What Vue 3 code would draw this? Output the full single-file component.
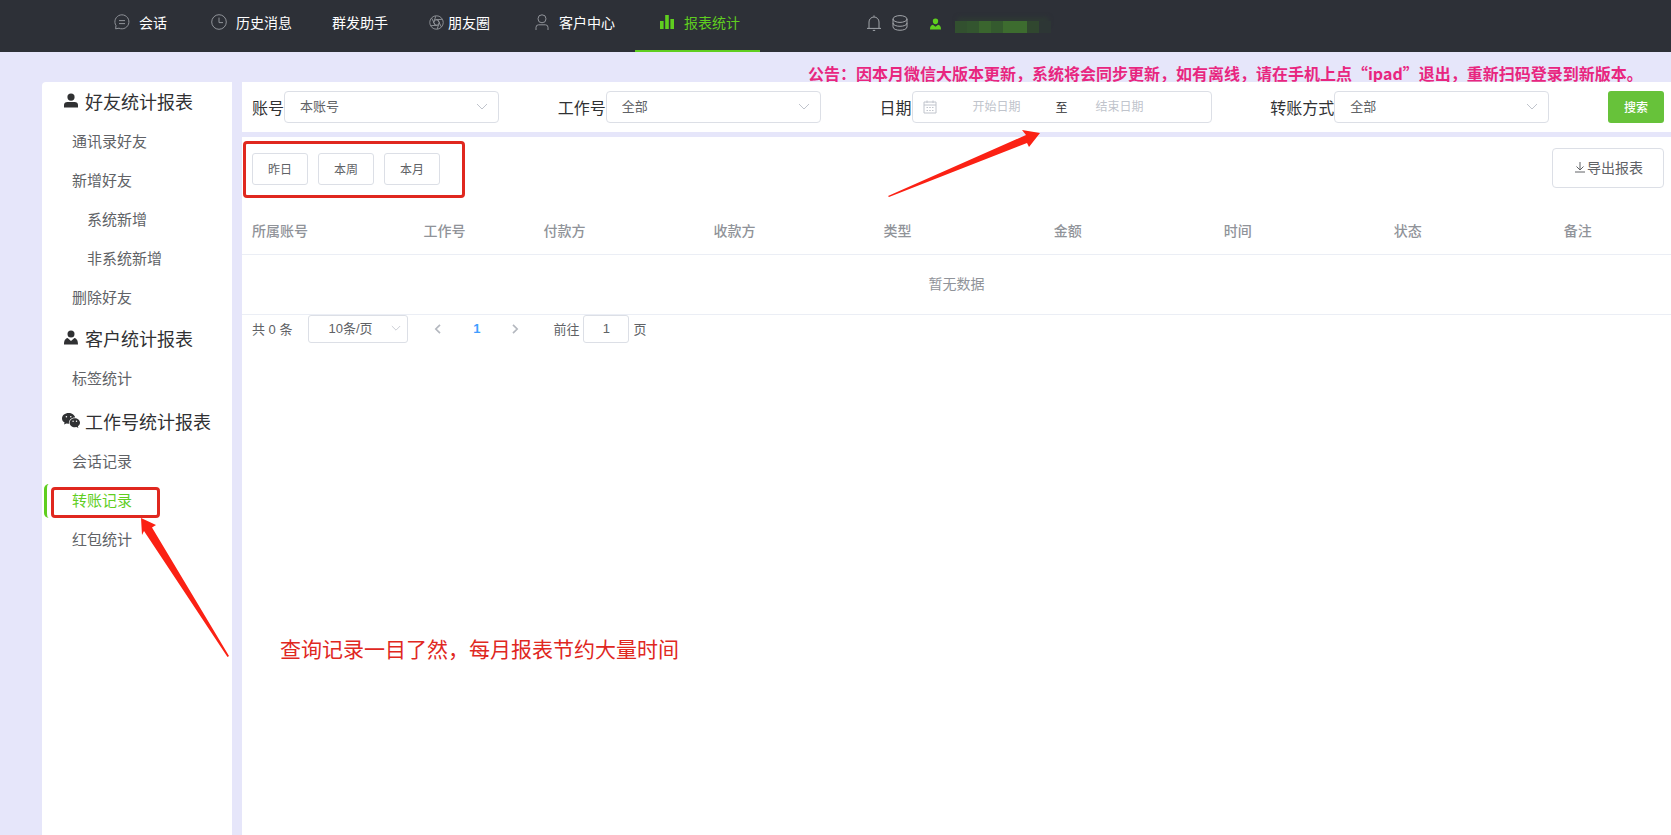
<script setup>
import { ref } from 'vue'

const nav = [
  { label: '会话', icon: 'chat' },
  { label: '历史消息', icon: 'clock' },
  { label: '群发助手', icon: '' },
  { label: '朋友圈', icon: 'aperture' },
  { label: '客户中心', icon: 'person' },
  { label: '报表统计', icon: 'bars', active: true }
]

const groups = [
  {
    title: '好友统计报表',
    icon: 'friend',
    items: [
      { label: '通讯录好友' },
      { label: '新增好友' },
      { label: '系统新增', nested: true },
      { label: '非系统新增', nested: true },
      { label: '删除好友' }
    ]
  },
  { title: '客户统计报表', icon: 'client', items: [{ label: '标签统计' }] },
  {
    title: '工作号统计报表',
    icon: 'wechat',
    items: [{ label: '会话记录' }, { label: '转账记录', active: true }, { label: '红包统计' }]
  }
]

const columns = ['所属账号', '工作号', '付款方', '收款方', '类型', '金额', '时间', '状态', '备注']
const ranges = ['昨日', '本周', '本月']

const start = ref('')
const end = ref('')
const page = ref('1')
</script>

<template>
  <div class="page">
    <header class="topbar">
      <nav class="nav">
        <a v-for="n in nav" :key="n.label" href="#" class="nav-item" :class="[n.icon, { active: n.active }]">
          <svg v-if="n.icon === 'chat'" viewBox="0 0 16 16" width="16" height="16">
            <path d="M1.6 14.8 L2 11.6 A7 7 0 1 1 5 14.2 Z M5 6.6h6 M5 9.6h6" />
          </svg>
          <svg v-else-if="n.icon === 'clock'" viewBox="0 0 16 16" width="16" height="16">
            <circle cx="8" cy="8" r="7.3" />
            <path d="M8 3.6V8.6h4" />
          </svg>
          <svg v-else-if="n.icon === 'aperture'" viewBox="0 0 16 16" width="15" height="15">
            <circle cx="8" cy="8" r="7.2" />
            <path d="M6.8 5.1 14 4.6 M9.2 5.1 13.2 12.6 M11.2 8 8.6 15 M9.2 10.9 2 11.4 M6.8 10.9 2.8 3.4 M4.8 8 7.4 1" />
            <path d="M6.8 5.1h2.4L11.2 8 9.2 10.9H6.8L4.8 8z" />
          </svg>
          <svg v-else-if="n.icon === 'person'" viewBox="0 0 14 16" width="14" height="16">
            <circle cx="7" cy="4.8" r="4" />
            <path d="M1 16V13.4a2.6 2.6 0 0 1 2.6-2.6h6.8a2.6 2.6 0 0 1 2.6 2.6V16" />
          </svg>
          <svg v-else-if="n.icon === 'bars'" class="solid" viewBox="0 0 14 14" width="14" height="14">
            <path d="M0 6h3.6v8H0zM5.2 0h3.6v14H5.2zM10.4 4H14v10h-3.6z" />
          </svg>
          <span>{{ n.label }}</span>
        </a>
      </nav>
      <div class="tools">
        <button class="tool" aria-label="通知">
          <svg viewBox="0 0 16 16" width="16" height="16">
            <path d="M8 .4v1.4M1 13.4h14M3 13.4V7a5 5 0 0 1 10 0v6.4M6.8 15.4h2.4" />
          </svg>
        </button>
        <button class="tool" aria-label="数据">
          <svg viewBox="0 0 16 16" width="16" height="16">
            <ellipse cx="8" cy="4" rx="7" ry="3.400" />
            <path d="M1 4v7.800c0 4.600 14 4.600 14 0V4M1 8c0 4.400 14 4.400 14 0" />
          </svg>
        </button>
        <svg class="user" viewBox="0 0 12 12" width="11" height="12">
          <path d="M6 0a2.9 2.9 0 0 1 2.9 3.1C8.900 5 7.600 6.400 6 6.400S3.100 5 3.100 3.100A2.900 2.900 0 0 1 6 0zM3.200 6.800 6 9l2.800-2.200C11 7.400 12 8.800 12 12H0c0-3.200 1-4.600 3.200-5.200z" />
        </svg>
        <span class="mosaic"></span>
      </div>
    </header>

    <p class="notice">公告：因本月微信大版本更新，系统将会同步更新，如有离线，请在手机上点“ipad”退出，重新扫码登录到新版本。</p>

    <div class="body">
      <aside class="sidebar">
        <section v-for="g in groups" :key="g.title" class="group" :class="g.icon">
          <h2>
            <svg v-if="g.icon === 'friend'" viewBox="0 0 14 14" width="14" height="15">
              <circle cx="7" cy="3.600" r="3.600" />
              <path d="M0 14v-2.400C0 9.400 1.400 8.400 3.400 8.400h7.200c2 0 3.400 1 3.400 3.200V14z" />
            </svg>
            <svg v-else-if="g.icon === 'client'" viewBox="0 0 14 14" width="14" height="15">
              <circle cx="7" cy="3.600" r="3.500" />
              <path d="M3.600 7.400 7 10.400l3.400-3C13 8.200 14 10 14 14H0c0-4 1-5.800 3.600-6.600z" />
            </svg>
            <svg v-else viewBox="0 0 18 15" width="18" height="15">
              <path d="M6.600 0C3 0 0 2.400 0 5.400c0 1.800 1 3.200 2.600 4.200L2 11.600l2.400-1.200 2.600.4C6.400 7 9.600 4.400 13.200 4.500 12.600 1.800 9.800 0 6.600 0z" />
              <path d="M18 9.700c0-2.500-2.400-4.500-5.200-4.500S7.600 7.200 7.600 9.700s2.400 4.500 5.200 4.500l1.700-.3 1.900 1-.5-1.700C17.200 12.400 18 11.200 18 9.700z" />
              <g class="eyes">
                <circle cx="4.400" cy="3.800" r=".8" /><circle cx="8.800" cy="3.800" r=".8" />
                <circle cx="11.100" cy="8.300" r=".7" /><circle cx="14.500" cy="8.300" r=".7" />
              </g>
            </svg>
            {{ g.title }}
          </h2>
          <ul>
            <li v-for="i in g.items" :key="i.label">
              <a href="#" :class="{ nested: i.nested, active: i.active }">{{ i.label }}</a>
            </li>
          </ul>
        </section>
      </aside>

      <main class="main">
        <form class="filters" @submit.prevent>
          <div class="field">
            <label for="account">账号</label>
            <span class="pick">
              <select id="account"><option>本账号</option></select>
              <svg viewBox="0 0 12 8" width="12" height="8"><path d="M1 1l5 5 5-5" /></svg>
            </span>
          </div>
          <div class="field">
            <label for="worker">工作号</label>
            <span class="pick">
              <select id="worker"><option>全部</option></select>
              <svg viewBox="0 0 12 8" width="12" height="8"><path d="M1 1l5 5 5-5" /></svg>
            </span>
          </div>
          <div class="field">
            <label for="start">日期</label>
            <span class="dates">
              <svg viewBox="0 0 14 14" width="14" height="14">
                <path d="M1 2h12v11H1zM1 5h12M4 .5V3M10 .5V3M3.500 7.500h1.500M6.200 7.500h1.600M9 7.500h1.500M3.500 10.500h1.500M6.200 10.500h1.600M9 10.500h1.500" />
              </svg>
              <input id="start" v-model="start" type="text" placeholder="开始日期" />
              <span class="to">至</span>
              <input v-model="end" type="text" placeholder="结束日期" aria-label="结束日期" />
            </span>
          </div>
          <div class="field">
            <label for="method">转账方式</label>
            <span class="pick">
              <select id="method"><option>全部</option></select>
              <svg viewBox="0 0 12 8" width="12" height="8"><path d="M1 1l5 5 5-5" /></svg>
            </span>
          </div>
          <button class="search" type="submit">搜索</button>
        </form>

        <section class="content">
          <div class="actions">
            <div class="ranges">
              <button v-for="r in ranges" :key="r">{{ r }}</button>
            </div>
            <button class="export">
              <svg viewBox="0 0 12 12" width="12" height="12"><path d="M6 1v8M2.500 5.500 6 9l3.500-3.500M1 11h10" /></svg>
              <span>导出报表</span>
            </button>
          </div>

          <table>
            <thead>
              <tr><th v-for="c in columns" :key="c" scope="col">{{ c }}</th></tr>
            </thead>
            <tbody>
              <tr><td :colspan="columns.length">暂无数据</td></tr>
            </tbody>
          </table>

          <div class="pager">
            <span class="total">共 0 条</span>
            <span class="pick size">
              <select aria-label="每页条数"><option>10条/页</option></select>
              <svg viewBox="0 0 12 8" width="10" height="7"><path d="M1 1l5 5 5-5" /></svg>
            </span>
            <button class="step" aria-label="上一页">
              <svg viewBox="0 0 8 12" width="7" height="10"><path d="M7 1L2 6l5 5" /></svg>
            </button>
            <button class="current">1</button>
            <button class="step" aria-label="下一页">
              <svg viewBox="0 0 8 12" width="7" height="10"><path d="M1 1l5 5-5 5" /></svg>
            </button>
            <label class="jump">前往<input v-model="page" type="text" />页</label>
          </div>
        </section>
      </main>
    </div>

    <div class="mark mark-menu"></div>
    <div class="mark mark-ranges"></div>
    <svg class="arrow arrow-menu" viewBox="0 0 88 140" width="88" height="140">
      <path d="M0 0 15 7 11 9.500 88 138 86.500 139 3 13 1 17z" />
    </svg>
    <svg class="arrow arrow-date" viewBox="0 0 153 68" width="153" height="68">
      <path d="M152 3 134 0 138 5 0 66 1 67 139 13 141 17z" />
    </svg>
    <p class="caption">查询记录一目了然，每月报表节约大量时间</p>
  </div>
</template>

<style>
html,
body,
#app {
  height: 100%;
}
</style>

<style scoped>
.page {
  position: relative;
  display: flex;
  flex-direction: column;
  min-height: 100%;
  background: #e6e6fa;
  color: #303133;
  font-family: "Liberation Sans", "Noto Sans CJK SC", sans-serif;
  font-size: 14px;
  overflow: hidden;
}
button,
input,
select {
  font: inherit;
  color: inherit;
  margin: 0;
}
button {
  cursor: pointer;
}
a {
  text-decoration: none;
  color: inherit;
}
svg {
  flex: none;
  fill: none;
  stroke: currentColor;
}

.topbar {
  display: flex;
  height: 52px;
  padding-left: 94px;
  background: #2d3037;
  color: #fff;
}
.nav {
  display: flex;
}
.nav-item {
  display: flex;
  align-items: center;
  gap: 9px;
  padding: 0 20px 6px;
  height: 44px;
  border-bottom: 2px solid transparent;
}
.nav-item svg {
  color: #909399;
}
.nav-item.clock {
  padding-left: 24px;
}
.nav-item.aperture {
  gap: 4px;
  padding-left: 21px;
}
.nav-item.person {
  gap: 10px;
  padding-left: 25px;
  padding-right: 20px;
}
.nav-item.active {
  gap: 10px;
  padding-left: 25px;
  color: #5fce1f;
  border-color: #5fce1f;
}
.nav-item.active svg {
  color: #5fce1f;
}
.solid,
.user {
  fill: currentColor;
  stroke: none;
}
.tools {
  display: flex;
  align-items: center;
  height: 46px;
  margin-left: 106px;
}
.tool {
  display: flex;
  padding: 0;
  margin-right: 10px;
  border: 0;
  background: none;
  color: #a2a5aa;
}
.user {
  margin: 2px 14px 0 12px;
  color: #5fce1f;
}
.mosaic {
  width: 96px;
  height: 12px;
  margin-top: 8px;
  background: linear-gradient(90deg, #32502f 0 12px, #33552f 12px 24px, #3a652e 24px 36px, #345a2e 36px 48px, #3d6c2f 48px 72px, #30472f 72px 84px, #2d3635 84px);
  box-shadow: 0 -6px 5px -3px #2e3b34;
}

.notice {
  display: flex;
  align-items: flex-end;
  height: 30px;
  margin: 0;
  padding-left: 808px;
  font: bold 16px/18px "Noto Sans CJK SC", sans-serif;
  color: #e8267f;
  white-space: nowrap;
}

.body {
  flex: 1;
  display: flex;
  gap: 10px;
  padding-left: 42px;
}
.sidebar {
  width: 190px;
  flex: none;
  background: #fff;
  border-radius: 4px 0 0 0;
}
.group + .group {
  margin-top: 2px;
}
.group.wechat {
  margin-top: 4px;
}
h2 {
  box-sizing: border-box;
  display: flex;
  align-items: center;
  gap: 7px;
  height: 40px;
  margin: 0;
  padding: 0 0 3px 22px;
  font-size: 18px;
  font-weight: 400;
}
h2 svg {
  fill: currentColor;
  stroke: none;
}
.wechat h2 {
  gap: 5px;
  padding-left: 20px;
}
.eyes {
  fill: #fff;
}
ul {
  margin: 0;
  padding: 0;
  list-style: none;
}
li {
  display: flex;
  align-items: center;
  height: 39px;
  padding-left: 2px;
}
li a {
  flex: 1;
  padding-left: 25px;
  border-left: 3px solid transparent;
  border-radius: 5px;
  font-size: 15px;
  line-height: 34px;
  color: #606266;
}
li a.nested {
  padding-left: 40px;
}
li a.active {
  color: #5fce1f;
  border-color: #5fce1f;
}

.main {
  flex: 1;
  min-width: 0;
  display: flex;
  flex-direction: column;
  gap: 5px;
}
.filters {
  display: flex;
  align-items: center;
  justify-content: space-between;
  height: 50px;
  padding: 0 7px 0 10px;
  background: #fff;
}
.field {
  display: flex;
  align-items: center;
  font-size: 16px;
}
.pick {
  position: relative;
  display: flex;
  align-items: center;
}
.pick select {
  appearance: none;
  width: 215px;
  height: 32px;
  padding: 0 30px 2px 15px;
  border: 1px solid #dcdfe6;
  border-radius: 4px;
  background: #fff;
  color: #606266;
  font-size: 13px;
}
.pick svg {
  position: absolute;
  right: 11px;
  color: #c0c4cc;
  pointer-events: none;
}
.dates {
  display: flex;
  align-items: center;
  box-sizing: border-box;
  width: 300px;
  height: 32px;
  padding-left: 10px;
  border: 1px solid #dcdfe6;
  border-radius: 4px;
}
.dates svg {
  margin-right: 8px;
  color: #c0c4cc;
}
.dates input {
  width: 104px;
  padding: 0;
  border: 0;
  outline: 0;
  background: none;
  font-size: 12px;
  text-align: center;
}
.dates input::placeholder {
  color: #c0c4cc;
}
.to {
  margin: 0 0 1px 7px;
  font-size: 12px;
}
.search {
  width: 56px;
  height: 32px;
  padding: 0 0 2px;
  border: 0;
  border-radius: 3px;
  background: #67c23a;
  color: #fff;
  font-size: 12px;
  font-weight: 500;
}

.content {
  flex: 1;
  background: #fff;
}
.actions {
  display: flex;
  justify-content: space-between;
  padding: 11px 7px 20px 10px;
}
.ranges {
  display: flex;
  align-items: center;
  gap: 10px;
  padding-top: 2px;
}
.actions button {
  padding: 0 0 2px;
  border: 1px solid #dcdfe6;
  background: #fff;
  color: #606266;
}
.ranges button {
  width: 56px;
  height: 32px;
  border-radius: 3px;
  font-size: 12px;
}
.actions .export {
  display: flex;
  align-items: center;
  padding: 0 20px 2px 21px;
  height: 40px;
  border-radius: 4px;
  gap: 1px;
}
table {
  width: 100%;
  table-layout: fixed;
  border-collapse: collapse;
  color: #909399;
}
th {
  box-sizing: border-box;
  width: 11.9%;
  height: 46px;
  padding: 0 0 2px 10px;
  text-align: left;
  font-weight: 500;
  border-bottom: 1px solid #ebeef5;
}
th:first-child {
  width: 12%;
}
th:nth-child(2) {
  width: 8.4%;
}
th:last-child {
  width: auto;
}
td {
  box-sizing: border-box;
  height: 60px;
  padding: 0 0 2px;
  text-align: center;
  border-bottom: 1px solid #ebeef5;
}
.pager {
  display: flex;
  align-items: center;
  height: 28px;
  padding-left: 10px;
  font-size: 13px;
  color: #606266;
}
.size {
  margin: 0 10px 0 16px;
}
.size select {
  width: 100px;
  height: 28px;
  padding: 0 20px 0 19px;
  border-radius: 3px;
}
.size svg {
  right: 7px;
}
.step,
.current {
  display: flex;
  justify-content: center;
  align-items: center;
  width: 39px;
  padding: 0;
  border: 0;
  background: none;
}
.step {
  color: #b4b8bf;
}
.current {
  color: #409eff;
  font-weight: 700;
}
.step svg {
  stroke-width: 2;
}
.jump {
  display: flex;
  align-items: center;
  gap: 4px;
  margin-left: 18px;
}
.jump input {
  box-sizing: border-box;
  width: 46px;
  height: 28px;
  padding: 0;
  border: 1px solid #dcdfe6;
  border-radius: 3px;
  text-align: center;
}

.mark {
  position: absolute;
  box-sizing: border-box;
  border: 3px solid #e0281f;
  border-radius: 4px;
  pointer-events: none;
}
.mark-menu {
  left: 51px;
  top: 487px;
  width: 109px;
  height: 31px;
}
.mark-ranges {
  left: 243px;
  top: 141px;
  width: 222px;
  height: 57px;
}
.arrow {
  position: absolute;
  fill: #fb2114;
  stroke: none;
  pointer-events: none;
}
.arrow-menu {
  left: 141px;
  top: 518px;
}
.arrow-date {
  left: 888px;
  top: 130px;
}
.caption {
  position: absolute;
  left: 280px;
  top: 635px;
  margin: 0;
  font-size: 21px;
  line-height: 30px;
  color: #e0281f;
}
</style>
